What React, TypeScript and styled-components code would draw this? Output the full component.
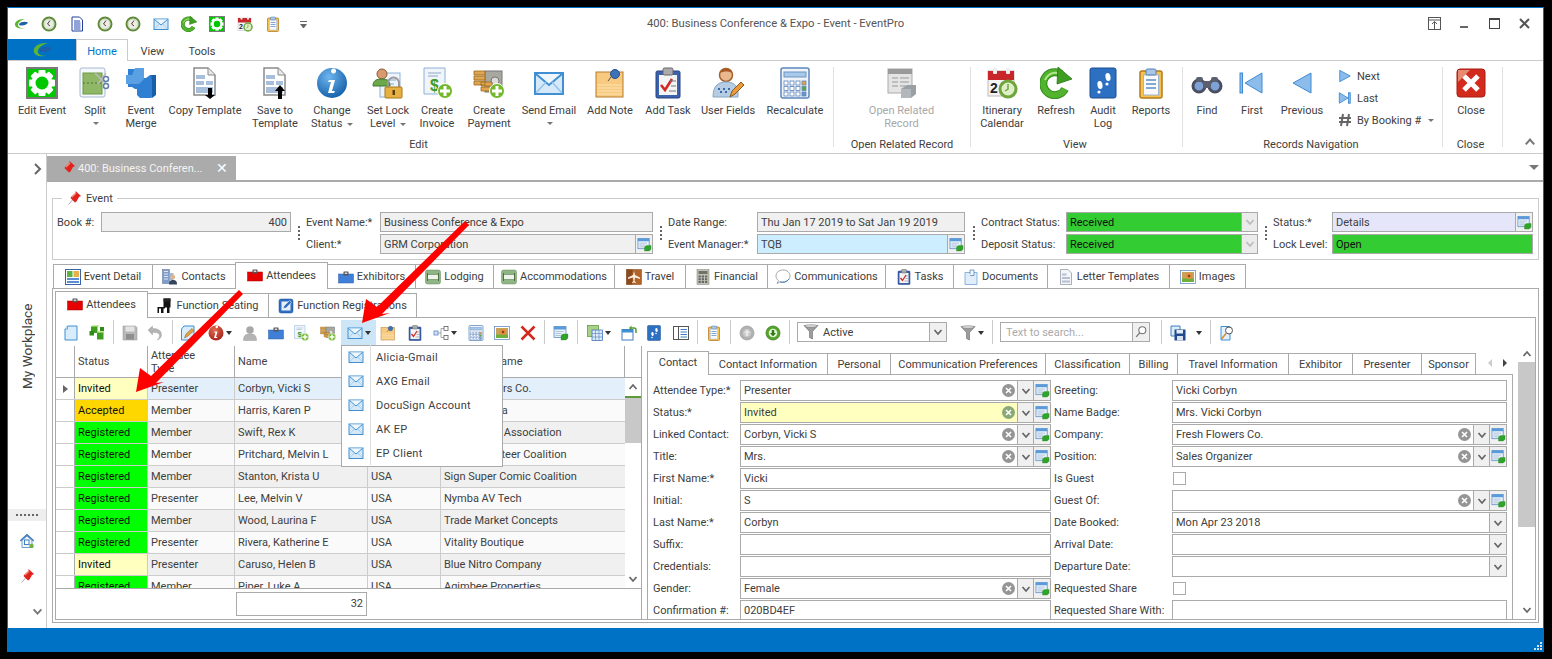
import React from 'react';
import styled, { createGlobalStyle } from 'styled-components';

const Global = createGlobalStyle`
  html, body { margin:0; padding:0; background:#000; height:100%; overflow:hidden; }
  body { font-family:Roboto,"Liberation Sans",sans-serif; font-size:11px; color:#404040; }
  * { box-sizing:border-box; }
`;

/* ---------- icons ---------- */
type IP = { s?: number };
const G = ({ s = 16, children }: IP & { children: React.ReactNode }) => (
  <svg width={s} height={s} viewBox="0 0 32 32" style={{ flex: 'none', display: 'block' }}>{children}</svg>
);
const GearShape = () => (
  <g>
    {[0, 45, 90, 135].map((a) => (
      <rect key={a} x="12.5" y="3" width="7" height="26" rx="1" fill="#fff" transform={`rotate(${a} 16 16)`} />
    ))}
    <circle cx="16" cy="16" r="10.5" fill="#fff" />
    <circle cx="16" cy="16" r="6.5" fill="#00c800" />
  </g>
);
const GearIcon = ({ s }: IP) => (
  <G s={s}><rect x="1" y="1" width="30" height="30" fill="#00c800" stroke="#7a7a7a" strokeWidth="2" /><GearShape /></G>
);
const SwirlLogo = ({ s }: IP) => (
  <G s={s}>
    <path d="M24 6C12 5 3 11 4 18c1 6 10 9 20 6-8 1-14-1-14-6 0-5 6-10 14-12z" fill="#5cb531" />
    <path d="M12 16c4-5 12-6 18-3-2 4-9 7-15 6-2 0-3-2-3-3z" fill="#1d5fa8" />
  </G>
);
const ClockIcon = ({ s }: IP) => (
  <G s={s}>
    <circle cx="16" cy="16" r="13" fill="#eceee4" stroke="#5f8a38" strokeWidth="4" />
    <circle cx="16" cy="16" r="9.5" fill="none" stroke="#b7c7a4" strokeWidth="1" />
    <path d="M18 9 13 16 18 20" fill="none" stroke="#444" strokeWidth="2" />
  </G>
);
const DocLines = ({ s }: IP) => (
  <G s={s}>
    <path d="M6 2h15l6 6v22H6z" fill="#fff" stroke="#233f9a" strokeWidth="2" />
    <path d="M10 10h12M10 14h13M10 18h13M10 22h13M10 26h13" stroke="#2246b4" strokeWidth="2" />
  </G>
);
const MailIcon = ({ s }: IP) => (
  <G s={s}>
    <rect x="2" y="6" width="28" height="21" fill="#d5e9f9" stroke="#3f8fd2" strokeWidth="2" />
    <path d="M3 7l13 11L29 7" fill="#eef6fd" stroke="#3f8fd2" strokeWidth="2" />
    <path d="M3 26l10-11M29 26L19 15" stroke="#93c3ea" strokeWidth="1.5" />
  </G>
);
const RefreshIcon = ({ s }: IP) => (
  <G s={s}>
    <path d="M25 22a11.5 11.5 0 1 1-4-15" fill="none" stroke="#2f8a18" strokeWidth="8" />
    <path d="M25 22a11.5 11.5 0 1 1-4-15" fill="none" stroke="#52b32e" strokeWidth="6" />
    <path d="M18 0l14 12-15 5z" fill="#3f9e22" stroke="#2a7414" strokeWidth="0.8" />
    <path d="M5 13c2-5 7-8 12-7" fill="none" stroke="#b5e68c" strokeWidth="2" />
  </G>
);
const CalIcon = ({ s }: IP) => (
  <G s={s}>
    <rect x="2" y="4" width="26" height="25" fill="#f4f4f4" stroke="#bbb" />
    <rect x="2" y="4" width="26" height="9" fill="#c8262a" />
    <rect x="7" y="1" width="4" height="6" rx="1" fill="#eee" /><rect x="20" y="1" width="4" height="6" rx="1" fill="#eee" />
    <text x="4" y="26" fontFamily="Liberation Sans" fontWeight="700" fontSize="14" fill="#222">2</text>
    <circle cx="22" cy="22" r="8" fill="#dff0c8" stroke="#6fa63c" strokeWidth="3" />
    <path d="M22 17v5l-3 2" stroke="#6fa63c" strokeWidth="1.5" fill="none" />
  </G>
);
const ClipOrange = ({ s }: IP) => (
  <G s={s}>
    <rect x="5" y="4" width="22" height="27" rx="2" fill="#f4c24e" stroke="#b67a1e" strokeWidth="1.5" />
    <rect x="8.5" y="8" width="15" height="20" fill="#fafafa" stroke="#9db6d4" />
    <path d="M11 13h10M11 17h10M11 21h10" stroke="#5a8ec8" strokeWidth="1.5" />
    <rect x="11" y="2" width="10" height="6" rx="1.5" fill="#aac6e6" stroke="#4f7fb8" />
  </G>
);
const SplitIcon = ({ s }: IP) => (
  <G s={s}>
    <rect x="1" y="1" width="25" height="29" rx="2" fill="#f4f7fb" stroke="#a8b8d0" />
    <rect x="4" y="6" width="19" height="21" fill="#8fb765" stroke="#6d9a45" />
    <path d="M4 16h19" stroke="#4d7030" strokeDasharray="2 2" />
    <path d="M16 6l10 10M27 6L19 17" stroke="#bbb" strokeWidth="1.5" />
    <circle cx="27" cy="12" r="2.5" fill="#fff" stroke="#5f7fa8" strokeWidth="1.5" /><circle cx="27" cy="19" r="2.5" fill="#fff" stroke="#5f7fa8" strokeWidth="1.5" />
  </G>
);
const MergeIcon = ({ s }: IP) => (
  <G s={s}>
    <path d="M3 2h13l3 3v6h2l4-3h5v20l-4 3H15l-3-3v-6h-2l-3-2H3z" fill="#2f80d2" />
    <path d="M10 1h9v11l-5 5H1V8h6z" fill="#5aa0e2" />
    <path d="M26 8h5v20l-4 3V13z" fill="#1a5ea8" />
  </G>
);
const TemplateIcon = ({ s, up }: IP & { up?: boolean }) => (
  <G s={s}>
    <path d="M5 1h14l7 7v20H5z" fill="#fff" stroke="#8a8a8a" strokeWidth="1.5" />
    <path d="M19 1v7h7" fill="#e8e8e8" stroke="#8a8a8a" />
    <path d="M7 8h9v4H7zM7 14h8v4H7zM17 14h7v4h-7zM7 20h17v6H7z" fill="#a8bfdc" />
    {up
      ? <path d="M19 32V24h-3l5-6 5 6h-3v8z" fill="#000" />
      : <path d="M19 21v7h-3l5 4 5-4h-3v-7z" fill="#000" />}
  </G>
);
const InfoIcon = ({ s, red }: IP & { red?: boolean }) => (
  <G s={s}>
    <defs>
      <radialGradient id="ib" cx="40%" cy="30%" r="75%"><stop offset="0" stopColor="#6fb6ee" /><stop offset="1" stopColor="#115ea8" /></radialGradient>
      <radialGradient id="ir" cx="40%" cy="30%" r="75%"><stop offset="0" stopColor="#e06a50" /><stop offset="1" stopColor="#a8201a" /></radialGradient>
    </defs>
    <circle cx="16" cy="16" r="15" fill={`url(#${red ? 'ir' : 'ib'})`} />
    <path d="M17.5 6.5a2.5 2.5 0 1 1 .1 0zM13 13h6l-3 11h3l-1 2h-6l3-11h-3z" fill="#fff" />
  </G>
);
const LockUserIcon = ({ s }: IP) => (
  <G s={s}>
    <rect x="8" y="6" width="20" height="24" fill="#eef4fb" stroke="#8eb2da" />
    <path d="M14 13h10M14 17h8" stroke="#7da6d4" />
    <circle cx="10" cy="7" r="5" fill="#d89a70" stroke="#8a5a3a" />
    <path d="M1 19c0-6 4-7 9-7s8 2 8 7z" fill="#6aa84a" stroke="#3f7a2a" />
    <path d="M16 21v-5a5.5 5.5 0 0 1 11 0v5" fill="none" stroke="#9a9a9a" strokeWidth="2" />
    <rect x="13" y="20" width="17" height="11" rx="1" fill="#e8b040" stroke="#a87818" />
    <rect x="20.5" y="23" width="2.5" height="5" fill="#5a4010" />
  </G>
);
const PlusBadge = () => (
  <g>
    <circle cx="24" cy="24" r="7.5" fill="#74b82e" stroke="#fff" />
    <path d="M24 19v10M19 24h10" stroke="#fff" strokeWidth="3" />
  </g>
);
const InvoiceIcon = ({ s }: IP) => (
  <G s={s}>
    <path d="M3 1h21v26H3z" fill="#eff5fb" stroke="#8fb0d6" />
    <path d="M7 6h13M7 9h10" stroke="#8ea8c4" />
    <text x="9" y="24" fontFamily="Liberation Sans" fontWeight="700" fontSize="16" fill="#3e9a2a">$</text>
    <PlusBadge />
  </G>
);
const PaymentIcon = ({ s }: IP) => (
  <G s={s}>
    <rect x="12" y="4" width="17" height="21" fill="#a8a8a0" stroke="#777" />
    <circle cx="22" cy="14" r="4" fill="#ddd" stroke="#777" />
    <path d="M1 4h11v4H1zM1 9h11v4H1zM1 14h11v4H1zM8 15h11v4H8zM8 20h11v4H8z" fill="#e0a550" stroke="#9a6a20" strokeWidth="0.8" />
    <PlusBadge />
  </G>
);
const NoteIcon = ({ s }: IP) => (
  <G s={s}>
    <rect x="2" y="5" width="27" height="25" fill="#f8ca80" stroke="#b87c2c" />
    <path d="M3 18h25M3 21h25M3 24h25M3 27h25" stroke="#fbe2b4" />
    <circle cx="21" cy="7" r="4.5" fill="#3b72b8" stroke="#234f8a" />
    <path d="M17 10l-3 4" stroke="#555" />
  </G>
);
const TaskIcon = ({ s }: IP) => (
  <G s={s}>
    <rect x="4" y="4" width="24" height="27" rx="1.5" fill="#3c62ae" stroke="#27437e" />
    <rect x="7" y="8" width="18" height="20" fill="#f4f4f4" />
    <rect x="11" y="1" width="10" height="7" rx="1.5" fill="#aaa" stroke="#666" />
    <path d="M9 18l4 5 7-11" fill="none" stroke="#d02a26" strokeWidth="2.6" />
    <path d="M18 14h6M19 19h5M17 24h7" stroke="#777" />
  </G>
);
const UserPenIcon = ({ s }: IP) => (
  <G s={s}>
    <circle cx="14" cy="8" r="6.5" fill="#eab88e" stroke="#a4622c" strokeWidth="1.5" />
    <path d="M8 6c1-5 11-6 12 0-3-2-8-2-12 0z" fill="#a85c24" />
    <path d="M1 30c0-12 6-15 13-15s12 3 12 11v4z" fill="#b4cde4" stroke="#8aa6c0" />
    <path d="M6 22h2M11 22h2M16 22h2M8 25h2M13 25h2" stroke="#3a6aa8" strokeWidth="2" />
    <path d="M18 30l2-6 9-9 3 3-9 9z" fill="#eb9a3e" stroke="#8a5a1a" />
  </G>
);
const CalcIcon = ({ s }: IP) => (
  <G s={s}>
    <rect x="2" y="1" width="28" height="30" rx="2" fill="#f0f4fa" stroke="#5c86bc" strokeWidth="1.5" />
    <rect x="5" y="5" width="22" height="5" fill="#a9c9ea" stroke="#6a94c4" />
    {[0, 1, 2, 3].map((c) => [0, 1, 2].map((r) => (
      <rect key={`${c}${r}`} x={5 + c * 6} y={14 + r * 5.5} width="4" height="4" fill={c === 3 ? (r === 0 ? '#e8a23e' : r === 1 ? '#5aa83c' : '#6f94c4') : '#fff'} stroke="#5c86bc" strokeWidth="0.8" />
    )))}
  </G>
);
const RelatedIcon = ({ s }: IP) => (
  <G s={s}>
    <rect x="2" y="2" width="24" height="24" fill="#e4e4e4" stroke="#aaa" />
    <rect x="2" y="2" width="24" height="5" fill="#9a9a9a" />
    <path d="M6 11h6M14 11h9M6 15h6M14 15h9M6 19h6M14 19h6" stroke="#999" />
    <path d="M15 22l6-4h9v9l-5 4H15z" fill="#9a9fa4" />
    <path d="M15 22h10v9H15z" fill="#b2b7bc" />
  </G>
);
const BookIcon = ({ s }: IP) => (
  <G s={s}>
    <rect x="3" y="1" width="26" height="30" rx="2" fill="#2d6fc0" stroke="#1c4f92" />
    <ellipse cx="13" cy="18" rx="2.5" ry="4" fill="#fff" transform="rotate(-10 13 18)" />
    <ellipse cx="21" cy="10" rx="2.5" ry="4" fill="#fff" transform="rotate(-10 21 10)" />
    <circle cx="12" cy="25" r="1.6" fill="#fff" /><circle cx="20" cy="17" r="1.6" fill="#fff" />
  </G>
);
const BinocIcon = ({ s }: IP) => (
  <G s={s}>
    <circle cx="8" cy="19" r="6" fill="#7ea2d6" stroke="#4a4e60" strokeWidth="3" />
    <circle cx="24" cy="19" r="6" fill="#7ea2d6" stroke="#4a4e60" strokeWidth="3" />
    <rect x="12" y="14" width="8" height="7" fill="#5a6070" />
    <rect x="5" y="10" width="7" height="5" rx="2" fill="#5a6070" /><rect x="20" y="10" width="7" height="5" rx="2" fill="#5a6070" />
  </G>
);
const TRI = '#8cbcec';
const FirstIcon = ({ s }: IP) => (<G s={s}><rect x="4" y="6" width="2.5" height="20" fill={TRI} stroke="#3f8ad0" /><path d="M26 6v20L9 16z" fill={TRI} stroke="#3f8ad0" /></G>);
const PrevIcon = ({ s }: IP) => (<G s={s}><path d="M25 6v20L7 16z" fill={TRI} stroke="#3f8ad0" /></G>);
const NextIcon = ({ s }: IP) => (<G s={s}><path d="M4 3v26l24-13z" fill={TRI} stroke="#3f8ad0" strokeWidth="2" /></G>);
const LastIcon = ({ s }: IP) => (<G s={s}><path d="M3 4v24l20-12z" fill={TRI} stroke="#3f8ad0" strokeWidth="2" /><rect x="24" y="4" width="4" height="24" fill={TRI} stroke="#3f8ad0" strokeWidth="2" /></G>);
const CloseIcon = ({ s }: IP) => (
  <G s={s}>
    <rect x="2" y="2" width="28" height="28" rx="3" fill="#d32a1e" stroke="#a81c14" />
    <path d="M3 3h12L3 15z" fill="#e68a70" />
    <path d="M9 9l14 14M23 9L9 23" stroke="#fff" strokeWidth="5" />
  </G>
);
const PinIcon = ({ s }: IP) => (
  <G s={s}>
    <path d="M5 29l9-10" stroke="#aaa" strokeWidth="2" />
    <path d="M19 2l11 10-4 2-5 9-3 2-9-9 2-3 8-7z" fill="#e0221c" />
    <path d="M20 5l-7 6-2 3 2 1 8-8z" fill="#f78a7a" />
  </G>
);
const HomeIcon = ({ s }: IP) => (
  <G s={s}>
    <path d="M2 15L16 2l14 13-2 1-12-11L4 16z" fill="#3f7fc4" stroke="#2c5f9a" />
    <path d="M6 15v14h20V15L16 6z" fill="#f1f5fa" stroke="#3f7fc4" strokeWidth="1.5" />
    <rect x="11" y="14" width="9" height="9" fill="#fff" stroke="#3f7fc4" strokeWidth="2" />
    <circle cx="25" cy="26" r="4.5" fill="#72b044" />
  </G>
);
const LookupIcon = ({ s }: IP) => (
  <G s={s}>
    <rect x="2" y="3" width="24" height="22" fill="#e9f1fa" stroke="#4d86c4" strokeWidth="1.5" />
    <rect x="2" y="3" width="24" height="6" fill="#5a9ad8" />
    <path d="M5 13h16M5 17h12M5 21h10" stroke="#9ab4d0" strokeWidth="1.5" />
    <path d="M16 21l4-3h10v8l-4 4H16z" fill="#2fa32a" stroke="#1c7a1c" strokeWidth="0.6" />
  </G>
);
const Briefcase = ({ s, c, b }: IP & { c: string; b: string }) => (
  <G s={s}>
    <rect x="1" y="10" width="30" height="18" fill={c} stroke={b} />
    <rect x="11" y="5" width="10" height="8" rx="1" fill="#555" />
    <rect x="13.5" y="7" width="5" height="3" fill="#ddd" />
  </G>
);
const EventDetailIcon = ({ s }: IP) => (
  <G s={s}>
    <rect x="1" y="1" width="30" height="30" fill="#fff" stroke="#3a62a8" strokeWidth="2" />
    <rect x="4" y="4" width="11" height="12" fill="#5cb540" /><rect x="17" y="4" width="11" height="12" fill="#e6b04a" />
    <rect x="4" y="18" width="24" height="4" fill="#5a8ed0" /><rect x="4" y="24" width="24" height="4" fill="#5a8ed0" />
  </G>
);
const ContactsIcon = ({ s }: IP) => (
  <G s={s}>
    <rect x="1" y="1" width="14" height="28" fill="#7f9dc8" stroke="#5a6f96" />
    <path d="M4 5h8M4 10h8M4 15h8M4 20h8" stroke="#dfe7f4" strokeWidth="2" />
    <rect x="15" y="8" width="8" height="14" fill="#aab8cc" />
    <circle cx="22" cy="16" r="4.5" fill="#e4b48a" />
    <path d="M14 31c0-7 3-9 8-9s8 2 8 9z" fill="#33445c" />
  </G>
);
const BedIcon = ({ s }: IP) => (
  <G s={s}>
    <rect x="1" y="2" width="30" height="28" rx="4" fill="#8fb584" stroke="#6a8a60" />
    <rect x="5" y="11" width="22" height="10" fill="#eef4ea" stroke="#4c7040" />
    <path d="M5 8v16M27 8v16" stroke="#4c7040" strokeWidth="2" />
  </G>
);
const TravelIcon = ({ s }: IP) => (
  <G s={s}>
    <rect x="1" y="1" width="30" height="30" fill="#b0642a" stroke="#7a4316" />
    <rect x="1" y="1" width="12" height="30" fill="#8a4a1e" />
    <path d="M16 4l2 8 10 5v3l-10-3-1 7 3 3v1l-4-1-4 1v-1l3-3-1-7-10 3v-3l10-5z" fill="#fbeedc" />
  </G>
);
const FinancialIcon = ({ s }: IP) => (
  <G s={s}>
    <rect x="4" y="1" width="24" height="30" fill="#bfc2b4" stroke="#7d8073" />
    <rect x="7" y="4" width="18" height="6" fill="#6f7267" />
    {[0, 1, 2].map((c) => [0, 1, 2].map((r) => (<rect key={`${c}${r}`} x={7 + c * 6.5} y={13 + r * 5.5} width="4.5" height="4" fill="#666" />)))}
  </G>
);
const BubbleIcon = ({ s }: IP) => (
  <G s={s}>
    <path d="M16 2c8 0 14 5 14 12s-6 12-14 12c-2 0-4 0-5-1l-7 4 3-6c-3-2-5-5-5-9C2 7 8 2 16 2z" fill="#fff" stroke="#888" strokeWidth="1.5" />
    <path d="M10 26c6 2 14 0 18-6" fill="none" stroke="#3f7fc4" strokeWidth="2" />
  </G>
);
const DocClipIcon = ({ s }: IP) => (
  <G s={s}>
    <path d="M4 7h24v24H4z" fill="#e0eefb" stroke="#6a9fd4" strokeWidth="1.5" />
    <path d="M14 10V2h8v11h-8" fill="#f2f7fd" stroke="#4f7fb8" strokeWidth="1.5" />
  </G>
);
const LetterIcon = ({ s }: IP) => (
  <G s={s}>
    <path d="M5 1h15l7 7v23H5z" fill="#f4f5f7" stroke="#8f96a4" strokeWidth="1.5" />
    <path d="M8 9h9v4H8zM8 16h16v4H8zM8 23h16v4H8z" fill="#b6c0d2" />
  </G>
);
const ImageIcon = ({ s }: IP) => (
  <G s={s}>
    <rect x="1" y="3" width="30" height="26" fill="#fff" stroke="#5f87c0" strokeWidth="1.5" />
    <rect x="4" y="6" width="24" height="20" fill="#c8a25a" />
    <rect x="4" y="19" width="24" height="7" fill="#6db13a" />
    <circle cx="18" cy="14" r="6" fill="#e88a38" /><circle cx="18" cy="14" r="2.5" fill="#7a4a1a" />
  </G>
);
const ChairIcon = ({ s }: IP) => (
  <G s={s}>
    <path d="M13 1h14v18h-2v11h-5V19h-4v2h-3v9H8v-9H4v9H1V18h12z" fill="#111" />
    <path d="M13 1h14v6H13z" fill="#222" />
  </G>
);
const RegIcon = ({ s }: IP) => (
  <G s={s}>
    <rect x="2" y="2" width="28" height="28" rx="4" fill="#2d6fc0" stroke="#1c4f92" />
    <rect x="7" y="7" width="18" height="18" fill="#e8f0fa" />
    <path d="M10 21l2-5 11-11 4 4-11 11z" fill="#2d6fc0" stroke="#fff" />
  </G>
);
const NewDocIcon = ({ s }: IP) => (
  <G s={s}><path d="M9 2h19v28H4V8z" fill="#d9ecfb" stroke="#3f8fd2" strokeWidth="2" /><path d="M9 2v6H4" fill="#fff" stroke="#3f8fd2" strokeWidth="1.5" /></G>
);
const CubesIcon = ({ s }: IP) => (
  <G s={s}>
    <path d="M4 3h13v13H4z" fill="#3f9e22" /><path d="M7 1h13l-3 3H4z" fill="#8bd04c" />
    <path d="M16 16h13v13H16z" fill="#3f9e22" /><path d="M18 13h13l-2 3H16z" fill="#8bd04c" />
    <path d="M1 12h9v9H1zM22 4h8v8h-8z" fill="#2f8a18" />
  </G>
);
const SaveIcon = ({ s }: IP) => (
  <G s={s}>
    <path d="M2 2h25l3 3v25H2z" fill="#b8b8b8" stroke="#909090" />
    <rect x="7" y="3" width="18" height="10" fill="#e4e4e4" /><rect x="8" y="18" width="16" height="11" fill="#8e8e8e" />
  </G>
);
const UndoIcon = ({ s }: IP) => (
  <G s={s}><path d="M2 10l9-8v5c10 0 18 3 18 13 0 5-4 9-9 10 4-3 5-6 5-9 0-5-6-6-14-6v5z" fill="#b4b4b4" stroke="#999" strokeWidth="0.8" /></G>
);
const EditDocIcon = ({ s }: IP) => (
  <G s={s}>
    <path d="M8 2h20v28H3V8z" fill="#d9ecfb" stroke="#3f8fd2" strokeWidth="2" />
    <path d="M9 26l3-8 12-11 4 4-12 11z" fill="#e8a23e" stroke="#7a5a20" />
  </G>
);
const PersonGrey = ({ s }: IP) => (
  <G s={s}><circle cx="16" cy="10" r="7.5" fill="#a8a8a8" /><path d="M3 31c0-11 5-13 13-13s13 2 13 13z" fill="#b4b4b4" stroke="#999" /></G>
);
const NodesIcon = ({ s }: IP) => (
  <G s={s}>
    <path d="M8 16h8V7h6M16 16v9h6" fill="none" stroke="#8a8a8a" strokeWidth="1.5" />
    <rect x="2" y="12" width="8" height="8" fill="#cfe4f8" stroke="#4a80bc" strokeWidth="1.5" />
    <rect x="22" y="3" width="8" height="8" fill="#fff" stroke="#555" strokeWidth="1.5" />
    <rect x="22" y="21" width="8" height="8" fill="#fff" stroke="#555" strokeWidth="1.5" />
  </G>
);
const XRed = ({ s }: IP) => (
  <G s={s}><path d="M3 3l26 26M29 3L3 29" stroke="#d4271e" strokeWidth="5" /></G>
);
const GridPlusIcon = ({ s }: IP) => (
  <G s={s}>
    <rect x="1" y="1" width="22" height="22" fill="#a8d088" stroke="#5a9a3a" strokeWidth="1.5" />
    <rect x="10" y="10" width="21" height="21" fill="#dce9f8" stroke="#3f70b4" strokeWidth="1.5" />
    <path d="M10 17h21M10 24h21M17 10v21M24 10v21" stroke="#3f70b4" />
  </G>
);
const WindowArrow = ({ s }: IP) => (
  <G s={s}>
    <rect x="2" y="9" width="22" height="21" fill="#fff" stroke="#3f7fc4" strokeWidth="2" />
    <rect x="2" y="9" width="22" height="6" fill="#3f8fd2" />
    <path d="M18 6h8c3 0 4 2 4 4v6" fill="none" stroke="#4f9e2c" strokeWidth="3" /><path d="M21 1l-5 5 5 5z" fill="#4f9e2c" />
  </G>
);
const PanelList = ({ s }: IP) => (
  <G s={s}>
    <rect x="1" y="3" width="30" height="26" fill="#fff" stroke="#555" strokeWidth="2" />
    <path d="M11 3v26" stroke="#555" strokeWidth="2" />
    <path d="M15 9h13M15 14h13M15 19h13M15 24h13" stroke="#3f7fc4" strokeWidth="2" />
  </G>
);
const CircleArrow = ({ s, up }: IP & { up?: boolean }) => (
  <G s={s}>
    <circle cx="16" cy="16" r="14" fill={up ? '#b0b0b0' : '#58a52e'} stroke={up ? '#a0a0a0' : '#3a7a1a'} strokeWidth="1.5" />
    <circle cx="16" cy="16" r="8.5" fill={up ? '#c8c8c8' : '#e9f5dc'} />
    <path d={up ? 'M16 9l6 7h-3.5v6h-5v-6H10z' : 'M16 23l6-7h-3.5v-6h-5v6H10z'} fill={up ? '#e8e8e8' : '#2f7a14'} />
  </G>
);
const FunnelIcon = ({ s }: IP) => (
  <G s={s}>
    <path d="M2 3h28L19 15v15l-6-3V15z" fill="#9c9c9c" stroke="#555" />
    <ellipse cx="16" cy="4" rx="13" ry="2.5" fill="#e0e0e0" stroke="#666" />
  </G>
);
const SaveBlue = ({ s }: IP) => (
  <G s={s}>
    <path d="M2 2h18v20H2z" fill="#dcebf9" stroke="#3f7fc4" strokeWidth="2" />
    <rect x="9" y="9" width="22" height="22" fill="#204a8c" />
    <rect x="13" y="10" width="13" height="7" fill="#e4ecf6" /><rect x="14" y="22" width="12" height="9" fill="#d8e2f0" />
  </G>
);
const DocSearch = ({ s }: IP) => (
  <G s={s}>
    <path d="M4 3h18v27H4z" fill="#e4f0fb" stroke="#3f8fd2" strokeWidth="2" />
    <circle cx="20" cy="11" r="7" fill="#fff" stroke="#555" strokeWidth="2" />
    <path d="M14 17L5 28" stroke="#d48a30" strokeWidth="3" />
  </G>
);
const Mag = ({ s }: IP) => (
  <G s={s}><circle cx="19" cy="12" r="8" fill="#fff" stroke="#777" strokeWidth="2.5" /><path d="M13 18L5 27" stroke="#777" strokeWidth="3" /></G>
);
const ChevDown = ({ c = '#666', s = 10 }: { c?: string; s?: number }) => (
  <svg width={s} height={s} viewBox="0 0 10 10" style={{ display: 'block', flex: 'none' }}><path d="M1.5 3L5 7l3.5-4" fill="none" stroke={c} strokeWidth="1.7" /></svg>
);
const ChevUp = ({ c = '#666', s = 10 }: { c?: string; s?: number }) => (
  <svg width={s} height={s} viewBox="0 0 10 10" style={{ display: 'block', flex: 'none' }}><path d="M1.5 7L5 3l3.5 4" fill="none" stroke={c} strokeWidth="1.7" /></svg>
);
const ChevRight = () => (
  <svg width="10" height="12" viewBox="0 0 10 12" style={{ display: 'block' }}><path d="M2 1l5 5-5 5" fill="none" stroke="#666" strokeWidth="2" /></svg>
);

/* ---------- shell ---------- */
const Window = styled.div`
  position: relative; margin: 7px 0 0 7px; width: 1537px; height: 645px;
  background: #fff; border: 1px solid #0072c6; border-bottom: none;
  display: flex; flex-direction: column;
`;
const TitleBar = styled.div`
  height: 31px; flex: none; display: grid; grid-template-columns: 1fr auto 1fr; align-items: center;
`;
const Qat = styled.div`display: flex; align-items: center; gap: 12px; padding-left: 5px;`;
const QatMore = styled.div`
  margin-left: 7px; width: 7px; height: 6px; border-top: 1px solid #666;
  &::after { content: ''; display: block; margin-top: 2px; border: 3.5px solid transparent; border-top: 4px solid #666; border-bottom: none; }
`;
const Title = styled.div`font-size: 11.25px; color: #555;`;
const WinCtrls = styled.div`display: flex; justify-content: flex-end; padding-right: 4px;`;
const WinBtn = styled.div`width: 30px; height: 30px; display: flex; align-items: center; justify-content: center;`;

const TabBar = styled.div`height: 22px; flex: none; display: flex; border-bottom: 1px solid #ccc;`;
const FileBtn = styled.div`
  width: 68px; background: #0072c6; display: flex; align-items: center; justify-content: center;
`;
const TopTab = styled.div<{ $w: number; $on?: boolean }>`
  width: ${(p) => p.$w}px; height: 22px; display: flex; align-items: center; justify-content: center; padding-top: 2px;
  ${(p) => (p.$on ? 'background:#fff;color:#0072c6;border:1px solid #ccc;border-bottom:none;' : 'color:#404040;')}
`;

const Ribbon = styled.div`height: 93px; flex: none; display: flex; padding-top: 6px; border-bottom: 1px solid #ccc;`;
const Group = styled.div<{ $w: number; $pl?: number }>`
  width: ${(p) => p.$w}px; height: 80px; flex: none; padding-left: ${(p) => p.$pl || 0}px;
  border-right: 1px solid #e0e0e0; display: flex; flex-direction: column; justify-content: space-between;
`;
const GroupItems = styled.div`display: flex; height: 62px;`;
const GroupLabel = styled.div<{ $ml?: number }>`
  text-align: center; line-height: 14px; height: 14px; margin-bottom: -5px; color: #404040; margin-left: ${(p) => p.$ml || 0}px;
`;
const RibBtn = styled.div<{ $w: number; $off?: boolean }>`
  width: ${(p) => p.$w}px; flex: none; display: flex; flex-direction: column; align-items: center;
  color: ${(p) => (p.$off ? '#a8a8a8' : '#404040')}; text-align: center;
`;
const RibText = styled.div`margin-top: 5px; line-height: 13px; white-space: nowrap;`;
const Caret = styled.span`
  display: inline-block; width: 0; height: 0; border: 3px solid transparent; border-top: 3px solid #777;
  border-bottom: none; vertical-align: middle; margin-left: 2px;
`;
const CaretLine = styled.div`display: flex; justify-content: center; height: 13px; align-items: center;`;
const SmallCol = styled.div`display: flex; flex-direction: column; gap: 4px; padding-left: 10px;`;
const SmallItem = styled.div`display: flex; align-items: center; gap: 5px; height: 18px; white-space: nowrap;`;
const Collapse = styled.div`margin-left: 21px; align-self: flex-end; margin-bottom: 5px;`;

const Workspace = styled.div`flex: 1; display: flex; min-height: 0;`;
const Sidebar = styled.div`
  width: 39px; flex: none; border-right: 1px solid #ccc; display: flex; flex-direction: column;
`;
const SideTop = styled.div`height: 21px; padding: 9px 3px 0 0; display: flex; justify-content: flex-end; flex: none;`;
const SideMid = styled.div`flex: 1; display: flex; justify-content: center; padding-top: 127px;`;
const Vertical = styled.div`
  writing-mode: vertical-rl; transform: rotate(180deg); font-size: 13.6px; color: #404040; height: 88px; text-align: center; white-space: nowrap;
`;
const Grip = styled.div`
  height: 12px; flex: none; background: #eee; display: flex; align-items: center; justify-content: center; gap: 2px;
  span { width: 2px; height: 2px; background: #666; }
`;
const SideIcon = styled.div<{ $mt?: number }>`height: 35px; flex: none; margin-top: ${(p) => p.$mt || 0}px; display: flex; align-items: center; justify-content: center;`;
const SideBottom = styled.div`height: 35px; flex: none; display: flex; justify-content: flex-end; padding: 13px 3px 0 0;`;

const Main = styled.div`flex: 1; min-width: 0; display: flex; flex-direction: column;`;
const DocStrip = styled.div`
  height: 28px; flex: none; padding-top: 2px; border-bottom: 2px solid #aaa; display: flex; align-items: flex-start; justify-content: space-between;
`;
const DocTab = styled.div`
  width: 189px; height: 24px; background: #ababab; color: #f4f4f4; display: flex; align-items: center; padding-left: 13px; gap: 2px; font-size: 11px; white-space: nowrap;
`;
const DocClose = styled.span`margin-left: auto; margin-right: 8px; font-size: 14px; color: #fff; line-height: 1;`;
const DocMore = styled.div`
  margin: 9px 4px 0 0; width: 0; height: 0; border: 5px solid transparent; border-top: 5px solid #777; border-bottom: none;
`;

const EventBox = styled.div`
  position: relative; flex: none; margin: 16px 0 0 5px; width: 1487px; height: 62px; border: 1px solid #ccc; padding: 13px 0 0 4px;
`;
const Legend = styled.div`
  position: absolute; left: 9px; top: -11px; background: #fff; padding: 0 4px; display: flex; align-items: center; gap: 4px; height: 20px;
`;
const EventGrid = styled.div`
  display: grid; grid-template-columns: 44px 190px 15px 74px 273px 15px 89px 208px 16px 85px 192px 15px 59px 201px;
  grid-template-rows: 20px 20px; row-gap: 2px; align-items: center;
`;
const Dots = styled.div<{ $col: number }>`
  grid-row: 1 / span 2; grid-column: ${(p) => p.$col}; display: flex; flex-direction: column; align-items: center; gap: 2px; padding-left: 1px;
  span { width: 2px; height: 2px; background: #666; }
`;
const Spacer = styled.div`grid-column: 1 / span 2;`;
const Lbl = styled.div`white-space: nowrap; color: #404040;`;
const FieldBox = styled.div<{ $bg?: string; $right?: boolean; $dark?: boolean; $flat?: boolean }>`
  height: ${(p) => (p.$flat ? '20px' : '21px')}; display: flex; align-items: stretch; border: 1px solid #aaa; background: ${(p) => p.$bg || '#fff'};
  color: ${(p) => (p.$dark ? '#111' : '#404040')}; ${(p) => (p.$right ? 'justify-content:flex-end;' : '')}
  overflow: hidden; min-width: 0;
`;
const FieldText = styled.div<{ $right?: boolean }>`
  flex: 1; min-width: 0; padding: 0 3px; line-height: 20px; white-space: nowrap; ${(p) => (p.$right ? 'text-align:right;' : '')}
`;
const FieldBtn = styled.div<{ $w?: number; $bg?: string }>`
  width: ${(p) => p.$w || 17}px; flex: none; background: ${(p) => p.$bg || '#f0f0f0'}; border-left: 1px solid #aaa;
  display: flex; align-items: center; justify-content: center;
`;
const Clear = styled.div<{ $c?: string }>`
  width: 13px; height: 13px; flex: none; align-self: center; margin-right: 2px; border-radius: 50%; background: ${(p) => p.$c || '#959595'};
  display: flex; align-items: center; justify-content: center;
`;

const Tabs = styled.div`display: flex; height: 25px; flex: none; align-items: flex-end; position: relative; z-index: 1;`;
const Tab = styled.div<{ $w: number; $on?: boolean; $h?: number }>`
  width: ${(p) => p.$w + 1}px; margin-right: -1px; flex: none;
  height: ${(p) => (p.$on ? (p.$h || 25) + 2 : p.$h || 25)}px;
  border: 1px solid #aaa; border-bottom: ${(p) => (p.$on ? 'none' : '1px solid #aaa')};
  background: #fff; display: flex; align-items: center; justify-content: center; gap: 3px; white-space: nowrap; color: #404040;
  ${(p) => (p.$on ? 'position:relative; z-index:2; padding-bottom:2px;' : '')}
`;
const TopTabs = styled(Tabs)`margin: 4px 0 -1px 6px;`;
const OuterPanel = styled.div`
  flex: none; margin-left: 5px; width: 1487px; height: 335px; border: 1px solid #aaa; padding: 2px 2px 0;
`;
const InnerTabs = styled(Tabs)`height: 27px; margin-bottom: -1px;`;
const InnerPanel = styled.div`
  width: 1481px; height: 303px; border: 1px solid #aaa; display: flex; flex-direction: column;
`;
const Toolbar = styled.div`height: 28px; flex: none; display: flex; align-items: flex-start; padding: 2px 0 0 3px;`;
const Tool = styled.div<{ $w?: number; $ml?: number; $on?: boolean; $gap?: number }>`
  ${(p) => (p.$w ? `width:${p.$w}px;` : '')} height: 25px; flex: none; position: relative;
  margin-left: ${(p) => p.$ml || 0}px; display: flex; align-items: center; justify-content: center; gap: ${(p) => p.$gap ?? 2}px;
  background: ${(p) => (p.$on ? '#cde6f7' : 'transparent')};
`;
const Sep = styled.div<{ $ml?: number }>`width: 1px; height: 24px; flex: none; background: #ccc; margin-left: ${(p) => p.$ml || 0}px;`;
const TArrow = styled.span`
  width: 0; height: 0; border: 3.5px solid transparent; border-top: 4px solid #333; border-bottom: none; flex: none;
`;
const ToolBox = styled.div<{ $w: number; $ml: number }>`
  width: ${(p) => p.$w}px; margin: 2px 0 0 ${(p) => p.$ml}px; height: 20px; border: 1px solid #aaa; display: flex; align-items: stretch; flex: none;
`;
const ToolBoxText = styled.div<{ $muted?: boolean }>`
  flex: 1; display: flex; align-items: center; gap: 4px; padding-left: 5px; color: ${(p) => (p.$muted ? '#aaa' : '#404040')};
`;

const Menu = styled.div`
  position: absolute; left: 0; top: 25px; width: 162px; height: 122px; background: #fff; border: 1px solid #aaa; z-index: 5; color: #404040;
`;
const MenuItem = styled.div`height: 24px; display: flex; align-items: center; letter-spacing: 0.3px; &:first-child { margin-top: -1px; }`;
const MenuIcon = styled.div`
  width: 29px; height: 24px; flex: none; border-right: 1px solid #ddd; display: flex; align-items: center; padding-left: 6px; margin-right: 5px;
`;

const Content = styled.div`flex: 1; display: flex; min-height: 0;`;
const LeftPane = styled.div`width: 586px; flex: none; border-right: 1px solid #aaa; display: flex; flex-direction: column;`;
const GridHead = styled.div`height: 32px; flex: none; display: flex; border-bottom: 1px solid #aaa;`;
const HeadCell = styled.div<{ $w: number; $noline?: boolean }>`
  width: ${(p) => p.$w}px; flex: none; padding: 0 3px; display: flex; align-items: center; line-height: 13px;
  ${(p) => (p.$noline ? '' : 'border-right:1px solid #aaa;')} color: #404040;
`;
const GridMid = styled.div`height: 210px; flex: none; display: flex; overflow: hidden;`;
const GridRows = styled.div`width: 569px; flex: none;`;
const Row = styled.div<{ $bg: string }>`height: 22px; display: flex; background: ${(p) => p.$bg}; border-bottom: 1px solid #ccc;`;
const Cell = styled.div<{ $w: number; $bg?: string; $dark?: boolean; $last?: boolean }>`
  width: ${(p) => p.$w}px; flex: none; padding: 0 3px; line-height: 21px; white-space: nowrap; overflow: hidden;
  ${(p) => (p.$last ? '' : 'border-right:1px solid #ccc;')} ${(p) => (p.$bg ? `background:${p.$bg};` : '')} color: ${(p) => (p.$dark ? '#111' : '#404040')};
`;
const Indicator = styled.div<{ $on?: boolean }>`
  width: 19px; flex: none; background: #fff; border-right: 1px solid #aaa; display: flex; align-items: center; justify-content: center;
  &::after { content: ''; ${(p) => (p.$on ? 'border:4px solid transparent;border-left:5px solid #666;border-right:none;' : '')} }
`;
const ScrollV = styled.div<{ $w: number }>`
  width: ${(p) => p.$w}px; flex: none; background: #fff; display: flex; flex-direction: column; align-items: center; justify-content: flex-start;
`;
const Thumb = styled.div<{ $h: number; $tick?: boolean }>`
  width: 100%; height: ${(p) => p.$h}px; background: #c8c8c8; flex: none;
  ${(p) => (p.$tick ? 'border-top:2px solid #5f9a3a;' : '')}
`;
const ScrollBtn = styled.div<{ $h: number }>`height: ${(p) => p.$h}px; flex: none; display: flex; align-items: center; justify-content: center;`;
const ScrollFill = styled.div`flex: 1;`;
const GridFoot = styled.div`flex: 1; border-top: 1px solid #aaa; padding: 3px 0 0 180px;`;
const SumBox = styled.div`
  width: 131px; height: 24px; border: 1px solid #aaa; line-height: 22px; text-align: right; padding-right: 3px;
`;

const RightPane = styled.div`flex: 1; min-width: 0; display: flex;`;
const RightMain = styled.div`width: 876px; flex: none; padding: 5px 5px 0; display: flex; flex-direction: column;`;
const FormTabs = styled.div`display: flex; height: 24px; flex: none; align-items: flex-end; margin-bottom: -1px; position: relative; z-index: 1;`;
const TabNav = styled.div`flex: 1; display: flex; align-items: center; justify-content: flex-end; gap: 11px; height: 22px; padding-right: 6px; align-self: flex-start; margin-top: 1px;`;
const NavTri = styled.span<{ $left?: boolean; $off?: boolean }>`
  width: 0; height: 0; border: 4px solid transparent;
  ${(p) => (p.$left ? `border-left:none;border-right:4px solid ${p.$off ? '#ccc' : '#444'};` : `border-right:none;border-left:4px solid ${p.$off ? '#ccc' : '#444'};`)}
`;
const FormPanel = styled.div`
  flex: 1; min-height: 0; border: 1px solid #aaa; border-bottom: none; padding: 5px 0 0 5px; overflow: hidden;
`;
const FormGrid = styled.div`
  display: grid; grid-template-columns: 87px 311px 121px 335px; column-gap: 0; grid-auto-rows: 21px; row-gap: 1px; align-items: center;
`;
const L2 = styled(Lbl)`padding-left: 3px;`;
const Check = styled.div`width: 13px; height: 13px; border: 1px solid #aaa; background: #fff; margin-left: 1px;`;

const StatusBar = styled.div`height: 24px; flex: none; background: #0072c6; display: flex; justify-content: flex-end; align-items: flex-end; padding: 0 1px 2px 0;`;
const Overlay = styled.svg`position: absolute; left: 0; top: 0; width: 1552px; height: 659px; pointer-events: none; z-index: 10;`;

/* ---------- data ---------- */
const ribbonEdit: [number, React.ReactNode, React.ReactNode][] = [
  [60, <GearIcon s={32} />, 'Edit Event'],
  [46, <SplitIcon s={32} />, <>Split<CaretLine><Caret /></CaretLine></>],
  [46, <MergeIcon s={32} />, <>Event<br />Merge</>],
  [82, <TemplateIcon s={32} />, 'Copy Template'],
  [58, <TemplateIcon s={32} up />, <>Save to<br />Template</>],
  [56, <InfoIcon s={32} />, <>Change<br />Status <Caret /></>],
  [56, <LockUserIcon s={32} />, <>Set Lock<br />Level <Caret /></>],
  [42, <InvoiceIcon s={32} />, <>Create<br />Invoice</>],
  [62, <PaymentIcon s={32} />, <>Create<br />Payment</>],
  [58, <MailIcon s={32} />, <>Send Email<CaretLine><Caret /></CaretLine></>],
  [64, <NoteIcon s={32} />, 'Add Note'],
  [52, <TaskIcon s={32} />, 'Add Task'],
  [68, <UserPenIcon s={32} />, 'User Fields'],
  [66, <CalcIcon s={32} />, 'Recalculate'],
];
const ribbonView: [number, React.ReactNode, React.ReactNode][] = [
  [52, <CalIcon s={32} />, <>Itinerary<br />Calendar</>],
  [56, <RefreshIcon s={32} />, 'Refresh'],
  [38, <BookIcon s={32} />, <>Audit<br />Log</>],
  [58, <ClipOrange s={32} />, 'Reports'],
];
const ribbonNav: [number, React.ReactNode, string][] = [
  [42, <BinocIcon s={32} />, 'Find'],
  [48, <FirstIcon s={32} />, 'First'],
  [52, <PrevIcon s={32} />, 'Previous'],
];
const mainTabs: [string, number, React.ReactNode, boolean?][] = [
  ['Event Detail', 99, <EventDetailIcon />],
  ['Contacts', 83, <ContactsIcon />],
  ['Attendees', 92, <Briefcase c="#e60000" b="#a00" />, true],
  ['Exhibitors', 88, <Briefcase c="#3f7fd8" b="#2a5fa8" />],
  ['Lodging', 78, <BedIcon />],
  ['Accommodations', 121, <BedIcon />],
  ['Travel', 71, <TravelIcon />],
  ['Financial', 82, <FinancialIcon />],
  ['Communications', 118, <BubbleIcon />],
  ['Tasks', 68, <TaskIcon />],
  ['Documents', 94, <DocClipIcon />],
  ['Letter Templates', 122, <LetterIcon />],
  ['Images', 76, <ImageIcon />],
];
const subTabs: [string, number, React.ReactNode, boolean?][] = [
  ['Attendees', 92, <Briefcase c="#e60000" b="#a00" />, true],
  ['Function Seating', 121, <ChairIcon />],
  ['Function Registrations', 148, <RegIcon />],
];
const formTabs: [string, number][] = [
  ['Contact', 61], ['Contact Information', 119], ['Personal', 63], ['Communication Preferences', 155],
  ['Classification', 84], ['Billing', 48], ['Travel Information', 111], ['Exhibitor', 64], ['Presenter', 69], ['Sponsor', 54],
];
const YEL = '#ffffc0'; const GRN = '#00ff00';
const rows: [string, string, string, string, string, string][] = [
  ['Invited', YEL, 'Presenter', 'Corbyn, Vicki S', 'USA', 'Fresh Flowers Co.'],
  ['Accepted', '#ffd700', 'Member', 'Harris, Karen P', 'USA', 'Sports Arena'],
  ['Registered', GRN, 'Member', 'Swift, Rex K', 'USA', 'City Fitness Association'],
  ['Registered', GRN, 'Member', 'Pritchard, Melvin L', 'USA', 'Event Volunteer Coalition'],
  ['Registered', GRN, 'Member', 'Stanton, Krista U', 'USA', 'Sign Super Comic Coalition'],
  ['Registered', GRN, 'Presenter', 'Lee, Melvin V', 'USA', 'Nymba AV Tech'],
  ['Registered', GRN, 'Member', 'Wood, Laurina F', 'USA', 'Trade Market Concepts'],
  ['Registered', GRN, 'Presenter', 'Rivera, Katherine E', 'USA', 'Vitality Boutique'],
  ['Invited', YEL, 'Presenter', 'Caruso, Helen B', 'USA', 'Blue Nitro Company'],
  ['Registered', GRN, 'Member', 'Piper, Luke A', 'USA', 'Agimbee Properties'],
];
const cols = [73, 87, 133, 73, 184];

type FP = { v?: string; bg?: string; clear?: boolean; drop?: boolean; calc?: boolean; tint?: string };
const Field = ({ v, bg, clear, drop, calc, tint }: FP) => (
  <FieldBox $bg={bg}>
    <FieldText>{v}</FieldText>
    {clear && (
      <Clear $c={tint}>
        <svg width="7" height="7" viewBox="0 0 7 7"><path d="M1 1l5 5M6 1L1 6" stroke="#fff" strokeWidth="1.6" /></svg>
      </Clear>
    )}
    {drop && <FieldBtn $w={calc ? 16 : 17}><ChevDown /></FieldBtn>}
    {calc && <FieldBtn><LookupIcon s={15} /></FieldBtn>}
  </FieldBox>
);
const full = { clear: true, drop: true, calc: true };
const formRows: [string, FP, string, FP | 'check'][] = [
  ['Attendee Type:*', { v: 'Presenter', ...full }, 'Greeting:', { v: 'Vicki Corbyn' }],
  ['Status:*', { v: 'Invited', bg: YEL, tint: '#8aa878', ...full }, 'Name Badge:', { v: 'Mrs. Vicki Corbyn' }],
  ['Linked Contact:', { v: 'Corbyn, Vicki S', ...full }, 'Company:', { v: 'Fresh Flowers Co.', ...full }],
  ['Title:', { v: 'Mrs.', ...full }, 'Position:', { v: 'Sales Organizer', ...full }],
  ['First Name:*', { v: 'Vicki' }, 'Is Guest', 'check'],
  ['Initial:', { v: 'S' }, 'Guest Of:', full],
  ['Last Name:*', { v: 'Corbyn' }, 'Date Booked:', { v: 'Mon Apr 23 2018', drop: true }],
  ['Suffix:', {}, 'Arrival Date:', { drop: true }],
  ['Credentials:', {}, 'Departure Date:', { drop: true }],
  ['Gender:', { v: 'Female', ...full }, 'Requested Share', 'check'],
  ['Confirmation #:', { v: '020BD4EF' }, 'Requested Share With:', {}],
];
const menuItems = ['Alicia-Gmail', 'AXG Email', 'DocuSign Account', 'AK EP', 'EP Client'];
const arrowPts = '362,323 366,299 377,307 465,221 469,225 382,314 390,313';

const Dot3 = ({ col }: { col: number }) => <Dots $col={col}><span /><span /><span /><span /></Dots>;
const GreenField = ({ v }: { v: string }) => (
  <FieldBox $bg="#33cc33" $dark $flat>
    <FieldText>{v}</FieldText>
    <FieldBtn $w={16} $bg="#ebebeb"><ChevDown c="#bbb" /></FieldBtn>
  </FieldBox>
);

export default function App() {
  return (
    <>
      <Global />
      <Window>
        <TitleBar>
          <Qat>
            <SwirlLogo /><ClockIcon /><DocLines /><ClockIcon /><ClockIcon /><MailIcon /><RefreshIcon /><GearIcon /><CalIcon /><ClipOrange />
            <QatMore />
          </Qat>
          <Title>400: Business Conference &amp; Expo - Event - EventPro</Title>
          <WinCtrls>
            <WinBtn>
              <svg width="13" height="13" viewBox="0 0 13 13"><rect x="0.5" y="0.5" width="12" height="12" fill="none" stroke="#555" /><path d="M0 3h13M6.5 12V5M4 7l2.5-2.5L9 7" fill="none" stroke="#555" /></svg>
            </WinBtn>
            <WinBtn><svg width="10" height="10" viewBox="0 0 10 10"><rect x="1" y="7" width="8" height="2" fill="#666" /></svg></WinBtn>
            <WinBtn><svg width="11" height="11" viewBox="0 0 11 11"><rect x="0.5" y="0.5" width="10" height="10" fill="none" stroke="#444" /><rect width="11" height="2" fill="#444" /></svg></WinBtn>
            <WinBtn><svg width="11" height="11" viewBox="0 0 11 11"><path d="M1 1l9 9M10 1l-9 9" stroke="#555" strokeWidth="2" /></svg></WinBtn>
          </WinCtrls>
        </TitleBar>

        <TabBar>
          <FileBtn><SwirlLogo s={22} /></FileBtn>
          <TopTab $w={52} $on>Home</TopTab>
          <TopTab $w={49}>View</TopTab>
          <TopTab $w={50}>Tools</TopTab>
        </TabBar>

        <Ribbon>
          <Group $w={826} $pl={4}>
            <GroupItems>
              {ribbonEdit.map(([w, ic, t], i) => (
                <RibBtn key={i} $w={w}>{ic}<RibText>{t}</RibText></RibBtn>
              ))}
            </GroupItems>
            <GroupLabel $ml={-8}>Edit</GroupLabel>
          </Group>
          <Group $w={137}>
            <GroupItems>
              <RibBtn $w={135} $off><RelatedIcon s={32} /><RibText>Open Related<br />Record</RibText></RibBtn>
            </GroupItems>
            <GroupLabel>Open Related Record</GroupLabel>
          </Group>
          <Group $w={212} $pl={5}>
            <GroupItems>
              {ribbonView.map(([w, ic, t], i) => (
                <RibBtn key={i} $w={w}>{ic}<RibText>{t}</RibText></RibBtn>
              ))}
            </GroupItems>
            <GroupLabel $ml={-8}>View</GroupLabel>
          </Group>
          <Group $w={260} $pl={3}>
            <GroupItems>
              {ribbonNav.map(([w, ic, t], i) => (
                <RibBtn key={i} $w={w}>{ic}<RibText>{t}</RibText></RibBtn>
              ))}
              <SmallCol>
                <SmallItem><NextIcon s={14} />Next</SmallItem>
                <SmallItem><LastIcon s={14} />Last</SmallItem>
                <SmallItem>
                  <svg width="14" height="14" viewBox="0 0 14 14"><path d="M5 1L3 13M11 1L9 13M1 5h12M1 9h12" stroke="#666" strokeWidth="2" fill="none" /></svg>
                  By Booking # <Caret />
                </SmallItem>
              </SmallCol>
            </GroupItems>
            <GroupLabel $ml={-6}>Records Navigation</GroupLabel>
          </Group>
          <Group $w={60}>
            <GroupItems>
              <RibBtn $w={56}><CloseIcon s={32} /><RibText>Close</RibText></RibBtn>
            </GroupItems>
            <GroupLabel $ml={-4}>Close</GroupLabel>
          </Group>
          <Collapse><ChevUp c="#777" s={12} /></Collapse>
        </Ribbon>

        <Workspace>
          <Sidebar>
            <SideTop><ChevRight /></SideTop>
            <SideMid><Vertical>My Workplace</Vertical></SideMid>
            <Grip><span /><span /><span /><span /><span /><span /></Grip>
            <SideIcon $mt={2}><HomeIcon /></SideIcon>
            <SideIcon><PinIcon /></SideIcon>
            <SideBottom><ChevDown c="#777" s={11} /></SideBottom>
          </Sidebar>

          <Main>
            <DocStrip>
              <DocTab>
                <PinIcon />400: Business Conferen...
                <DocClose>✕</DocClose>
              </DocTab>
              <DocMore />
            </DocStrip>

            <EventBox>
              <Legend><PinIcon />Event</Legend>
              <EventGrid>
                <Dot3 col={3} /><Dot3 col={6} /><Dot3 col={9} /><Dot3 col={12} />
                <Lbl>Book #:</Lbl>
                <FieldBox $bg="#f0f0f0" $flat><FieldText $right>400</FieldText></FieldBox>
                <Lbl>Event Name:*</Lbl>
                <FieldBox $bg="#f0f0f0" $flat><FieldText>Business Conference &amp; Expo</FieldText></FieldBox>
                <Lbl>Date Range:</Lbl>
                <FieldBox $bg="#f0f0f0" $flat><FieldText>Thu Jan 17 2019 to Sat Jan 19 2019</FieldText></FieldBox>
                <Lbl>Contract Status:</Lbl>
                <GreenField v="Received" />
                <Lbl>Status:*</Lbl>
                <FieldBox $bg="#e6e6fa" $flat><FieldText>Details</FieldText><FieldBtn><LookupIcon s={15} /></FieldBtn></FieldBox>

                <Spacer />
                <Lbl>Client:*</Lbl>
                <FieldBox $bg="#f0f0f0" $flat><FieldText>GRM Corporation</FieldText><FieldBtn><LookupIcon s={15} /></FieldBtn></FieldBox>
                <Lbl>Event Manager:*</Lbl>
                <FieldBox $bg="#cceeff" $flat><FieldText>TQB</FieldText><FieldBtn><LookupIcon s={15} /></FieldBtn></FieldBox>
                <Lbl>Deposit Status:</Lbl>
                <GreenField v="Received" />
                <Lbl>Lock Level:</Lbl>
                <FieldBox $bg="#33cc33" $dark $flat><FieldText>Open</FieldText></FieldBox>
              </EventGrid>
            </EventBox>

            <TopTabs>
              {mainTabs.map(([t, w, ic, on]) => (
                <Tab key={t} $w={w} $on={on}>{ic}{t}</Tab>
              ))}
            </TopTabs>

            <OuterPanel>
              <InnerTabs>
                {subTabs.map(([t, w, ic, on]) => (
                  <Tab key={t} $w={w} $on={on} $h={25}>{ic}{t}</Tab>
                ))}
              </InnerTabs>
              <InnerPanel>
                <Toolbar>
                  <Tool $w={24}><NewDocIcon /></Tool>
                  <Tool $w={28}><CubesIcon /></Tool>
                  <Sep $ml={2} />
                  <Tool $w={32}><SaveIcon /></Tool>
                  <Tool $w={18}><UndoIcon /></Tool>
                  <Sep $ml={8} />
                  <Tool $w={30}><EditDocIcon /></Tool>
                  <Tool $w={33}><InfoIcon red /><TArrow /></Tool>
                  <Tool $w={28}><PersonGrey /></Tool>
                  <Tool $w={23}><Briefcase c="#3f7fd8" b="#2a5fa8" /></Tool>
                  <Tool $w={28}><InvoiceIcon /></Tool>
                  <Tool $w={26}><PaymentIcon /></Tool>
                  <Tool $w={35} $on>
                    <MailIcon /><TArrow />
                    <Menu>
                      {menuItems.map((m) => (
                        <MenuItem key={m}><MenuIcon><MailIcon /></MenuIcon>{m}</MenuItem>
                      ))}
                    </Menu>
                  </Tool>
                  <Tool $w={24}><NoteIcon /></Tool>
                  <Tool $w={30}><TaskIcon /></Tool>
                  <Tool $w={30}><NodesIcon /><TArrow /></Tool>
                  <Tool $w={32}><CalcIcon /></Tool>
                  <Tool $w={20}><ImageIcon /></Tool>
                  <Tool $w={32}><XRed /></Tool>
                  <Sep />
                  <Tool $w={32}><LookupIcon /></Tool>
                  <Sep />
                  <Tool $w={41}><GridPlusIcon /><TArrow /></Tool>
                  <Tool $w={20}><WindowArrow /></Tool>
                  <Tool $w={30}><BookIcon /></Tool>
                  <Tool $w={24}><PanelList /></Tool>
                  <Sep $ml={4} />
                  <Tool $w={32}><ClipOrange /></Tool>
                  <Sep />
                  <Tool $w={32}><CircleArrow up /></Tool>
                  <Tool $w={20}><CircleArrow /></Tool>
                  <Sep $ml={6} />
                  <ToolBox $w={150} $ml={7}>
                    <ToolBoxText><FunnelIcon />Active</ToolBoxText>
                    <FieldBtn><ChevDown /></FieldBtn>
                  </ToolBox>
                  <Tool $ml={13}><FunnelIcon /><TArrow /></Tool>
                  <Sep $ml={8} />
                  <ToolBox $w={150} $ml={7}>
                    <ToolBoxText $muted>Text to search...</ToolBoxText>
                    <FieldBtn><Mag s={14} /></FieldBtn>
                  </ToolBox>
                  <Sep $ml={11} />
                  <Tool $ml={8} $gap={10}><SaveBlue /><TArrow /></Tool>
                  <Sep $ml={8} />
                  <Tool $ml={8}><DocSearch /></Tool>
                </Toolbar>

                <Content>
                  <LeftPane>
                    <GridHead>
                      <HeadCell $w={19} />
                      <HeadCell $w={73}>Status</HeadCell>
                      <HeadCell $w={87}>Attendee<br />Type</HeadCell>
                      <HeadCell $w={133}>Name</HeadCell>
                      <HeadCell $w={73}>Country</HeadCell>
                      <HeadCell $w={184}>Company Name</HeadCell>
                    </GridHead>
                    <GridMid>
                      <GridRows>
                        {rows.map((r, i) => (
                          <Row key={r[3]} $bg={i === 0 ? '#e3effa' : i % 2 ? '#fafafa' : '#f0f0f0'}>
                            <Indicator $on={i === 0} />
                            <Cell $w={cols[0]} $bg={r[1]} $dark>{r[0]}</Cell>
                            <Cell $w={cols[1]}>{r[2]}</Cell>
                            <Cell $w={cols[2]}>{r[3]}</Cell>
                            <Cell $w={cols[3]}>{r[4]}</Cell>
                            <Cell $w={cols[4]} $last>{r[5]}</Cell>
                          </Row>
                        ))}
                      </GridRows>
                      <ScrollV $w={16}>
                        <ScrollBtn $h={18}><ChevUp /></ScrollBtn>
                        <Thumb $h={47} $tick />
                        <ScrollFill />
                        <ScrollBtn $h={18}><ChevDown /></ScrollBtn>
                      </ScrollV>
                    </GridMid>
                    <GridFoot>
                      <SumBox>32</SumBox>
                    </GridFoot>
                  </LeftPane>

                  <RightPane>
                    <RightMain>
                      <FormTabs>
                        {formTabs.map(([t, w], i) => (
                          <Tab key={t} $w={w} $on={i === 0} $h={22}>{t}</Tab>
                        ))}
                        <TabNav><NavTri $left $off /><NavTri /></TabNav>
                      </FormTabs>
                      <FormPanel>
                        <FormGrid>
                          {formRows.map(([l1, f1, l2, f2]) => (
                            <React.Fragment key={l1}>
                              <Lbl>{l1}</Lbl>
                              <Field {...f1} />
                              <L2>{l2}</L2>
                              {f2 === 'check' ? <Check /> : <Field {...f2} />}
                            </React.Fragment>
                          ))}
                        </FormGrid>
                      </FormPanel>
                    </RightMain>
                    <ScrollV $w={17}>
                      <ScrollBtn $h={16}><ChevUp /></ScrollBtn>
                      <Thumb $h={165} />
                      <ScrollFill />
                      <ScrollBtn $h={18}><ChevDown /></ScrollBtn>
                    </ScrollV>
                  </RightPane>
                </Content>
              </InnerPanel>
            </OuterPanel>
          </Main>
        </Workspace>
        <StatusBar>
          <svg width="8" height="8" viewBox="0 0 8 8"><path d="M6 0h2v2H6zM3 3h2v2H3zM6 3h2v2H6zM0 6h2v2H0zM3 6h2v2H3zM6 6h2v2H6z" fill="#cfe4f6" /></svg>
        </StatusBar>
      </Window>
      <Overlay viewBox="0 0 1552 659">
        <polygon points={arrowPts} fill="#f00" />
        <polygon points={arrowPts} fill="#f00" transform="translate(-226 69)" />
      </Overlay>
    </>
  );
}
